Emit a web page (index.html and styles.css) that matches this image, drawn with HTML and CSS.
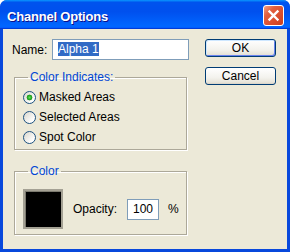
FILE: index.html
```html
<!DOCTYPE html>
<html lang="en">
<head>
  <meta charset="UTF-8">
  <title>Channel Options</title>
  <link rel="stylesheet" href="styles.css">
</head>
<body>
  <div class="window">
    <div class="titlebar">
      <span class="title">Channel Options</span>
      <button class="close" aria-label="Close">
        <svg width="19" height="19" viewBox="0 0 19 19"><path d="M5.5 5.5 L13.5 13.5 M13.5 5.5 L5.5 13.5" stroke="#fff" stroke-width="2.4" stroke-linecap="square"/></svg>
      </button>
    </div>
    <div class="content">
      <div class="main">
        <div class="name-row">
          <label class="name-label">Name:</label>
          <div class="field name-field"><span class="sel">Alpha 1</span></div>
        </div>

        <fieldset class="group indicates">
          <legend>Color Indicates:</legend>
          <label class="radio"><input type="radio" name="ind" checked><span>Masked Areas</span></label>
          <label class="radio"><input type="radio" name="ind"><span>Selected Areas</span></label>
          <label class="radio"><input type="radio" name="ind"><span>Spot Color</span></label>
        </fieldset>

        <fieldset class="group color">
          <legend>Color</legend>
          <div class="color-row">
            <div class="swatch"></div>
            <span class="op-label">Opacity:</span>
            <div class="field op-field">100</div>
            <span class="pct">%</span>
          </div>
        </fieldset>
      </div>
      <div class="side">
        <button class="btn default">OK</button>
        <button class="btn">Cancel</button>
      </div>
    </div>
  </div>
</body>
</html>
```

FILE: styles.css
```css
body {
  margin: 0;
  background: #fff;
  font-family: "Liberation Sans", Arial, sans-serif;
  font-size: 12px;
  color: #000;
}
.window {
  width: 290px;
  height: 252px;
  display: flex;
  flex-direction: column;
  background: #0848dc;
  border-radius: 7px 7px 0 0;
  overflow: hidden;
}
.titlebar {
  height: 29px;
  flex: none;
  display: flex;
  align-items: flex-start;
  padding-left: 7px;
  background: linear-gradient(180deg, #0997ff, #0053ee 8%, #0050ee 40%, #0066ff 88%, #0066ff 93%, #005bff 95%, #003dd7 96%, #003dd7);
}
.title {
  margin-top: 9px;
  color: #fff;
  font-weight: bold;
  font-size: 13px;
  line-height: 15px;
  letter-spacing: -0.2px;
  text-shadow: 1px 1px #0f1089;
}
.close {
  margin: 5px 6px 0 auto;
  width: 21px;
  height: 21px;
  padding: 0;
  border: 1px solid #fff;
  border-radius: 3px;
  background: linear-gradient(135deg, #f3a187 0%, #e2603f 30%, #d84b2c 70%, #c9401f 100%);
  display: flex;
  align-items: center;
  justify-content: center;
}
.content {
  flex: 1;
  margin: 0 3px 3px;
  background: #ece9d8;
  display: flex;
  align-items: flex-start;
  padding: 10px 0 0 9px;
}
.main {
  width: 177px;
}
.name-row {
  display: flex;
  align-items: center;
  height: 21px;
}
.name-label {
  width: 40px;
}
.field {
  box-sizing: border-box;
  height: 21px;
  border: 1px solid #7f9db9;
  background: #fff;
  line-height: 14px;
  padding-top: 2px;
}
.name-field {
  width: 137px;
  padding-left: 5px;
}
.sel {
  display: inline-block;
  background: #316ac5;
  color: #fff;
}
.group {
  box-sizing: border-box;
  width: 173px;
  margin: 10px 0 0 2px;
  border: 1px solid #aca899;
  box-shadow: 1px 1px 0 #fff, inset 1px 1px 0 #fff;
  padding: 3px 0 2px 8px;
  min-inline-size: 0;
}
.group legend {
  padding: 0 2px;
  margin-left: 5px;
  color: #0046d5;
  line-height: 14px;
}
.group.color {
  margin-top: 14px;
  padding: 11px 0 5px 8px;
}
.radio {
  display: flex;
  align-items: center;
  height: 20px;
}
.radio input {
  appearance: none;
  -webkit-appearance: none;
  box-sizing: border-box;
  width: 13px;
  height: 13px;
  margin: 0 3px 0 0;
  border: 1px solid #1c5180;
  border-radius: 50%;
  background: linear-gradient(135deg, #d8d6cc, #fff 80%);
}
.radio input:checked {
  background: radial-gradient(circle, #5fe05a 0, #2db42a 1.6px, #1f961d 2.6px, transparent 3.2px), linear-gradient(135deg, #d8d6cc, #fff 80%);
}
.color-row {
  display: flex;
  align-items: center;
}
.swatch {
  box-sizing: border-box;
  width: 40px;
  height: 40px;
  border: 2px solid #a4a194;
  box-shadow: inset 1px 1px 0 #7d7b70;
  background: #000;
}
.op-label {
  margin-left: 10px;
}
.op-field {
  width: 32px;
  margin-left: 10px;
  text-align: center;
}
.pct {
  margin-left: 9px;
}
.side {
  margin-left: 16px;
  width: 71px;
  display: flex;
  flex-direction: column;
  gap: 10px;
  padding-top: 0;
}
.btn {
  height: 18px;
  padding: 0;
  border: 1px solid #003c74;
  border-radius: 3px;
  background: linear-gradient(180deg, #fff, #f3f2ed 60%, #e6e3d8 90%, #d6d0c5);
  font-family: "Liberation Sans", Arial, sans-serif;
  font-size: 12px;
  line-height: 16px;
  color: #000;
}
.btn.default {
  box-shadow: inset 1px 1px 0 #cee7ff, inset -1px -1px 0 #6982ee;
}
```
